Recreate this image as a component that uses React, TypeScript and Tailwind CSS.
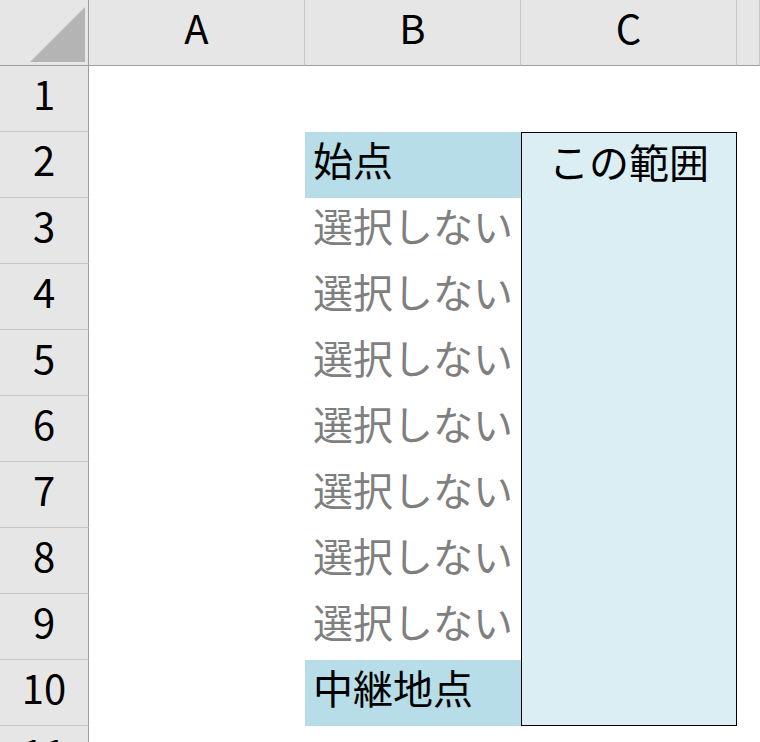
import React from "react";

const font = { fontFamily: '"Noto Sans CJK JP", "Noto Sans", sans-serif' };

export default function App() {
  const rows = [1, 2, 3, 4, 5, 6, 7, 8, 9, 10, 11];
  const bText: Record<number, { t: string; fill: boolean; gray: boolean }> = {
    2: { t: "始点", fill: true, gray: false },
    3: { t: "選択しない", fill: false, gray: true },
    4: { t: "選択しない", fill: false, gray: true },
    5: { t: "選択しない", fill: false, gray: true },
    6: { t: "選択しない", fill: false, gray: true },
    7: { t: "選択しない", fill: false, gray: true },
    8: { t: "選択しない", fill: false, gray: true },
    9: { t: "選択しない", fill: false, gray: true },
    10: { t: "中継地点", fill: true, gray: false },
  };
  return (
    <div
      className="w-[760px] h-[742px] overflow-hidden bg-white text-[40px] text-black"
      style={font}
    >
      <div className="grid w-[760px] grid-cols-[89px_216px_216px_216px_1fr] grid-rows-[66px_repeat(11,66px)]">
        {/* corner */}
        <div className="bg-[#e6e6e6] border-r border-b border-[#9e9e9e] flex items-end justify-end pr-[3px] pb-[3px]">
          <svg width="55" height="55" viewBox="0 0 55 55">
            <polygon points="55,0 55,55 0,55" fill="#b4b4b4" />
          </svg>
        </div>
        {["A", "B", "C", "D"].map((c) => (
          <div
            key={c}
            className="bg-[#e6e6e6] border-r border-[#c6c6c6] border-b-[1px] border-b-[#9e9e9e] flex items-center justify-center leading-[48px] pb-[12px]"
          >
            {c === "D" ? "" : c}
          </div>
        ))}
        {rows.map((r) => (
          <React.Fragment key={r}>
            <div
              className={`bg-[#e6e6e6] border-r border-r-[#9e9e9e] border-b border-b-[#c6c6c6] flex justify-center leading-[48px] ${
                r === 11 ? "items-start pt-[2px]" : "items-center pb-[12px]"
              }`}
            >
              {r}
            </div>
            <div className="bg-white" />
            <div
              className={`flex items-center pl-[8px] pb-[12px] leading-[48px] ${
                bText[r]?.fill ? "bg-[#b7dde8]" : "bg-white"
              } ${bText[r]?.gray ? "text-[#7f7f7f]" : "text-black"}`}
            >
              {bText[r]?.t ?? ""}
            </div>
            {r === 2 ? (
              <div className="row-span-9 bg-[#daeef3] border border-black flex justify-center pt-[4px] leading-[48px]">
                この範囲
              </div>
            ) : r === 1 || r === 11 ? (
              <div className="bg-white" />
            ) : null}
            <div className="bg-white" />
          </React.Fragment>
        ))}
      </div>
    </div>
  );
}
